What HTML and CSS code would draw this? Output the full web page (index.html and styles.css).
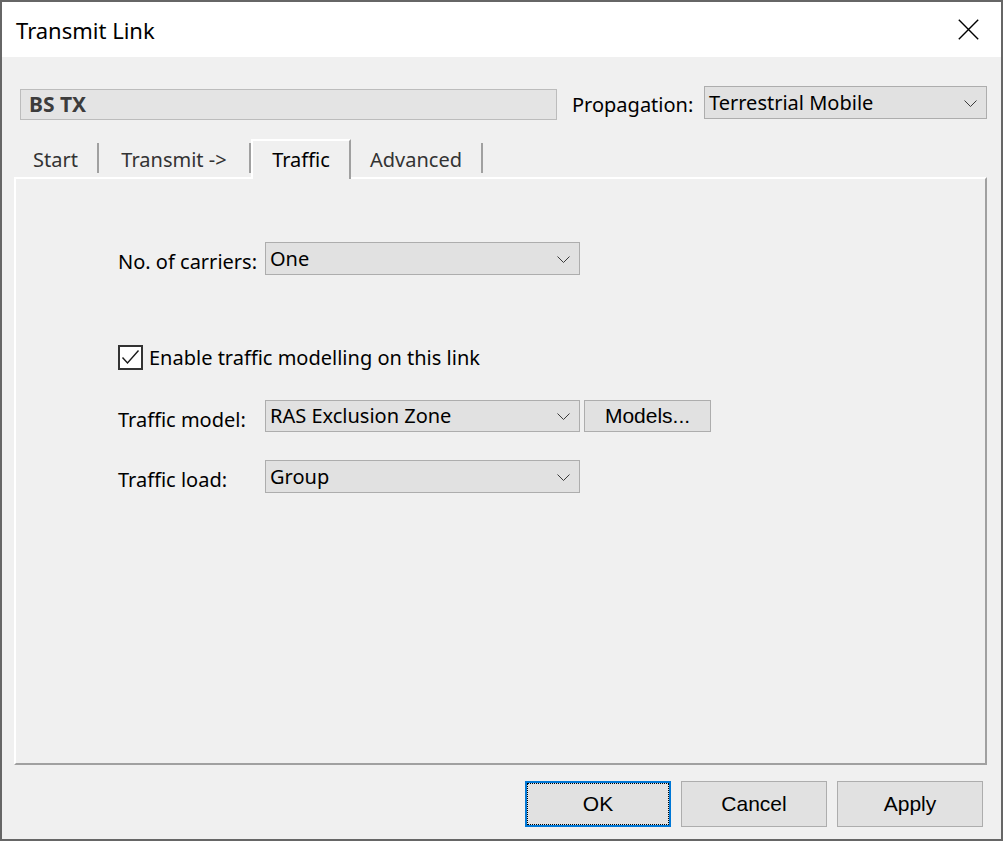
FILE: index.html
```html
<!DOCTYPE html>
<html lang="en">
<head>
<meta charset="utf-8">
<title>Transmit Link</title>
<link rel="stylesheet" href="styles.css">
</head>
<body>
<div class="window">
  <header class="titlebar">
    <span class="title">Transmit Link</span>
    <span class="close" aria-label="Close">
      <svg width="21" height="21" viewBox="0 0 21 21"><path d="M0.8 0.8 L20.2 20.2 M20.2 0.8 L0.8 20.2" stroke="#000" stroke-width="1.4" fill="none"/></svg>
    </span>
  </header>
  <main class="content">
    <div class="toprow">
      <div class="namefield">BS TX</div>
      <span class="prop-label">Propagation:</span>
      <div class="select select-prop">
        <span>Terrestrial Mobile</span>
        <svg class="chev" width="13" height="7" viewBox="0 0 13 7"><path d="M0.5 0.5 L6.5 6.5 L12.5 0.5" stroke="#3a3a3a" stroke-width="1" fill="none"/></svg>
      </div>
    </div>
    <nav class="tabs">
      <div class="tab tab-start">Start</div>
      <div class="tab tab-transmit">Transmit -&gt;</div>
      <div class="tab tab-traffic active">Traffic</div>
      <div class="tab tab-advanced">Advanced</div>
    </nav>
    <section class="panel">
      <div class="field-row row-carriers">
        <span class="label">No. of carriers:</span>
        <div class="select select-wide">
          <span>One</span>
          <svg class="chev" width="13" height="7" viewBox="0 0 13 7"><path d="M0.5 0.5 L6.5 6.5 L12.5 0.5" stroke="#3a3a3a" stroke-width="1" fill="none"/></svg>
        </div>
      </div>
      <label class="check-row">
        <span class="checkbox">
          <svg width="21" height="21" viewBox="0 0 21 21"><path d="M2.5 10.5 L7.5 16 L18.5 3.5" stroke="#1a1a1a" stroke-width="1.4" fill="none"/></svg>
        </span>
        <span class="check-label">Enable traffic modelling on this link</span>
      </label>
      <div class="field-row row-model">
        <span class="label">Traffic model:</span>
        <div class="select select-wide">
          <span>RAS Exclusion Zone</span>
          <svg class="chev" width="13" height="7" viewBox="0 0 13 7"><path d="M0.5 0.5 L6.5 6.5 L12.5 0.5" stroke="#3a3a3a" stroke-width="1" fill="none"/></svg>
        </div>
        <button class="btn btn-models">Models...</button>
      </div>
      <div class="field-row row-load">
        <span class="label">Traffic load:</span>
        <div class="select select-wide">
          <span>Group</span>
          <svg class="chev" width="13" height="7" viewBox="0 0 13 7"><path d="M0.5 0.5 L6.5 6.5 L12.5 0.5" stroke="#3a3a3a" stroke-width="1" fill="none"/></svg>
        </div>
      </div>
    </section>
    <footer class="buttons">
      <button class="btn btn-dialog btn-ok">OK</button>
      <button class="btn btn-dialog">Cancel</button>
      <button class="btn btn-dialog">Apply</button>
    </footer>
  </main>
</div>
</body>
</html>
```
FILE: styles.css
```css
* {
  box-sizing: border-box;
}

html,
body {
  margin: 0;
  padding: 0;
}

body {
  background: #f0f0f0;
  font-family: "Noto Sans", "Open Sans", sans-serif;
  font-size: 20px;
  color: #000;
}

.window {
  width: 1003px;
  height: 841px;
  border: 2px solid #666666;
  display: flex;
  flex-direction: column;
  background: #f0f0f0;
}

/* Title bar */
.titlebar {
  flex: none;
  height: 55px;
  background: #fff;
  display: flex;
  align-items: center;
  justify-content: space-between;
  padding: 0 22px 0 14px;
}

.title {
  font-size: 22px;
  line-height: 1;
  margin-top: 1px;
}

.close {
  display: flex;
  width: 21px;
  height: 21px;
  margin-top: -1px;
}

/* Content */
.content {
  flex: 1;
  display: flex;
  flex-direction: column;
}

.toprow {
  flex: none;
  display: flex;
  align-items: flex-start;
  height: 33px;
  margin: 29px 14px 0 18px;
}

.namefield {
  width: 537px;
  height: 31px;
  margin-top: 3px;
  background: #e4e4e4;
  border: 1px solid #bcbcbc;
  font-weight: 700;
  font-size: 21px;
  line-height: 28px;
  color: #3c3c3c;
  padding-left: 8px;
}

.prop-label {
  margin-left: 15px;
  line-height: 33px;
  margin-top: 2px;
}

.select {
  display: flex;
  align-items: center;
  justify-content: space-between;
  height: 33px;
  background: #e1e1e1;
  border: 1px solid #adadad;
  padding: 0 9px 0 4px;
  line-height: 1;
}

.select span {
  margin-top: 0;
}

.select-prop {
  width: 283px;
  margin-left: auto;
}

.chev {
  flex: none;
  margin-top: 1px;
}

/* Tabs */
.tabs {
  flex: none;
  display: flex;
  align-items: flex-end;
  height: 38px;
  margin: 20px 0 0 12px;
}

.tab {
  height: 30px;
  margin-bottom: 4px;
  display: flex;
  align-items: center;
  justify-content: center;
  border-right: 2px solid #a0a0a0;
  color: #333;
  padding-top: 2px;
}

.tab-start {
  width: 85px;
}

.tab-transmit {
  width: 152px;
}

.tab-traffic {
  width: 100px;
}

.tab-advanced {
  width: 132px;
}

.tab.active {
  position: relative;
  z-index: 1;
  height: 40px;
  margin-bottom: -2px;
  background: #f0f0f0;
  border-top: 2px solid #fff;
  border-left: 2px solid #fff;
  border-right: 2px solid #a0a0a0;
  color: #000;
  padding-top: 0;
  padding-bottom: 2px;
}

/* Panel */
.panel {
  flex: none;
  height: 588px;
  margin: 0 14px 0 12px;
  border-top: 2px solid #fff;
  border-left: 2px solid #fff;
  border-right: 2px solid #a0a0a0;
  border-bottom: 2px solid #a0a0a0;
  padding: 63px 0 0 102px;
  display: flex;
  flex-direction: column;
  align-items: flex-start;
}

.field-row {
  display: flex;
  align-items: flex-start;
}

.label {
  width: 147px;
  height: 33px;
  line-height: 33px;
  padding-top: 3px;
  white-space: nowrap;
}

.select-wide {
  width: 315px;
}

.check-row {
  display: flex;
  align-items: center;
  gap: 6px;
  margin-top: 70px;
}

.checkbox {
  width: 25px;
  height: 25px;
  border: 2px solid #333;
  background: #fff;
  display: flex;
  align-items: center;
  justify-content: center;
}

.check-label {
  line-height: 25px;
}

.row-model {
  margin-top: 30px;
}

.row-model .select {
  height: 32px;
}

.row-load {
  margin-top: 27px;
}

/* Buttons */
.btn {
  font-family: "Liberation Sans", Arial, sans-serif;
  font-size: 21px;
  color: #000;
  background: #e1e1e1;
  border: 1px solid #adadad;
  padding: 0;
  margin: 0;
}

.btn-models {
  width: 127px;
  height: 32px;
  margin-left: 4px;
}

.buttons {
  flex: none;
  display: flex;
  justify-content: flex-end;
  gap: 10px;
  margin-top: 16px;
  padding-right: 18px;
}

.btn-dialog {
  width: 146px;
  height: 46px;
}

.btn-ok {
  border: 2px solid #0078d7;
  outline: 1px dotted #000;
  outline-offset: -3px;
}
```
